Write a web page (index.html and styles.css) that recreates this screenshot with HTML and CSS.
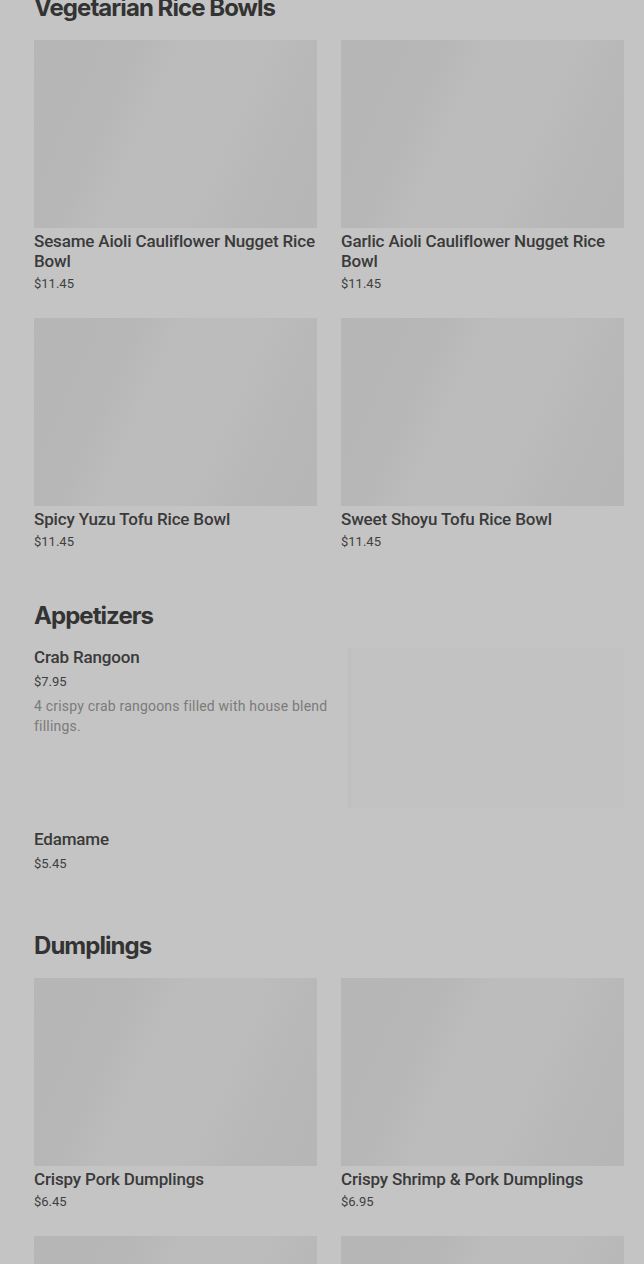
FILE: index.html
```html
<!DOCTYPE html>
<html lang="en">
<head>
<meta charset="utf-8">
<title>Menu</title>
<link rel="stylesheet" href="styles.css">
</head>
<body>
<main class="page">
  <section class="section section-first">
    <h2 class="section-title">Vegetarian Rice Bowls</h2>
    <div class="grid">
      <div class="card">
        <div class="thumb"></div>
        <div class="name">Sesame Aioli Cauliflower Nugget Rice Bowl</div>
        <div class="price">$11.45</div>
      </div>
      <div class="card">
        <div class="thumb"></div>
        <div class="name">Garlic Aioli Cauliflower Nugget Rice Bowl</div>
        <div class="price">$11.45</div>
      </div>
      <div class="card">
        <div class="thumb"></div>
        <div class="name">Spicy Yuzu Tofu Rice Bowl</div>
        <div class="price">$11.45</div>
      </div>
      <div class="card">
        <div class="thumb"></div>
        <div class="name">Sweet Shoyu Tofu Rice Bowl</div>
        <div class="price">$11.45</div>
      </div>
    </div>
  </section>

  <section class="section section-list">
    <h2 class="section-title">Appetizers</h2>
    <div class="list">
      <div class="row">
        <div class="row-text">
          <div class="name">Crab Rangoon</div>
          <div class="price price-list">$7.95</div>
          <div class="desc">4 crispy crab rangoons filled with house blend fillings.</div>
        </div>
        <div class="row-thumb"></div>
      </div>
      <div class="row row-plain">
        <div class="row-text">
          <div class="name">Edamame</div>
          <div class="price price-list">$5.45</div>
        </div>
      </div>
    </div>
  </section>

  <section class="section section-dumplings">
    <h2 class="section-title">Dumplings</h2>
    <div class="grid">
      <div class="card">
        <div class="thumb"></div>
        <div class="name">Crispy Pork Dumplings</div>
        <div class="price">$6.45</div>
      </div>
      <div class="card">
        <div class="thumb"></div>
        <div class="name">Crispy Shrimp &amp; Pork Dumplings</div>
        <div class="price">$6.95</div>
      </div>
      <div class="card">
        <div class="thumb"></div>
        <div class="name">&nbsp;</div>
        <div class="price">&nbsp;</div>
      </div>
      <div class="card">
        <div class="thumb"></div>
        <div class="name">&nbsp;</div>
        <div class="price">&nbsp;</div>
      </div>
    </div>
  </section>
</main>
</body>
</html>
```

FILE: styles.css
```css
html, body {
  margin: 0;
  padding: 0;
  background: #c4c4c4;
  overflow: hidden;
}

.page {
  padding: 0 20px 0 34px;
  font-family: Roboto, "Liberation Sans", sans-serif;
  color: #3c3c3c;
}

.section-first {
  margin-top: -10px;
}

.section-title {
  margin: 0 0 16px;
  padding-top: 2px;
  font-family: Inter, "Liberation Sans", sans-serif;
  font-weight: 700;
  font-size: 24px;
  line-height: 32px;
  letter-spacing: -0.95px;
  color: #333333;
}

.grid {
  display: grid;
  grid-template-columns: 283px 283px;
  column-gap: 24px;
  row-gap: 24px;
}

.card {
  display: flex;
  flex-direction: column;
}

.thumb {
  height: 188px;
  background: linear-gradient(114deg, #b6b6b6 0%, #b7b7b7 28%, #bcbcbc 42%, #bcbcbc 62%, #b8b8b8 78%, #b6b6b6 100%);
}

.name {
  margin-top: 3px;
  font-size: 17px;
  line-height: 20px;
  font-weight: 500;
  letter-spacing: -0.16px;
  color: #3a3a3a;
}

.price {
  margin-top: 3px;
  font-size: 13px;
  line-height: 20px;
  color: #404040;
}

.section-list {
  margin-top: 46px;
}

.row {
  display: flex;
  gap: 14px;
  height: 160px;
}

.row-text {
  flex: 1;
}

.row .name {
  margin-top: -1px;
}

.price-list {
  margin-top: 5px;
}

.desc {
  margin-top: 4px;
  font-size: 14px;
  line-height: 20px;
  letter-spacing: 0.2px;
  color: #7b7b7b;
}

.row-thumb {
  width: 276px;
  height: 160px;
  background: #c2c2c2;
  box-shadow: inset 3px 0 0 #bfbfbf;
}

.row-plain {
  height: auto;
  margin-top: 22px;
}

.section-dumplings {
  margin-top: 54px;
}
```
